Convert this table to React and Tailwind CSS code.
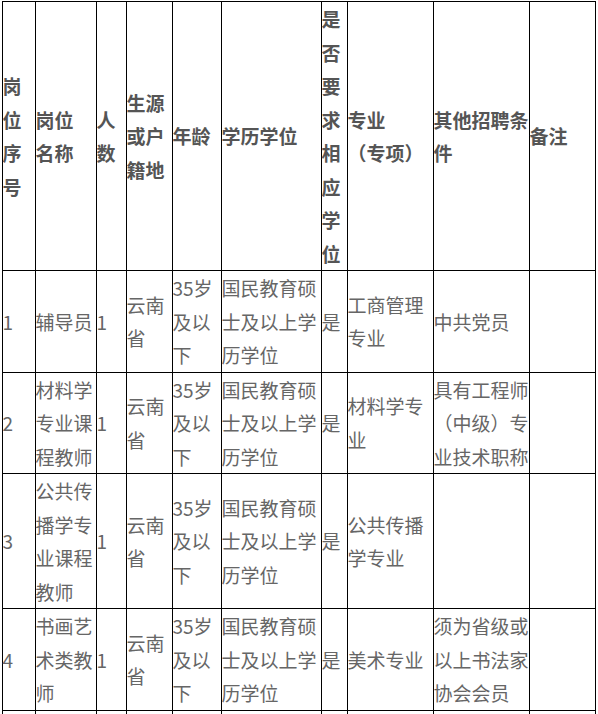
import React from 'react';

const COLS = [33, 61, 30, 46, 49, 100, 26, 86, 96, 66];

// header labels; a \n marks a forced line break
const HEADERS = [
  '岗位序号',
  '岗位\n名称',
  '人数',
  '生源或户籍地',
  '年龄',
  '学历学位',
  '是否要求相应学位',
  '专业\n（专项）',
  '其他招聘条件',
  '备注',
];

const ROWS = [
  ['1', '辅导员', '1', '云南省', '35岁及以下', '国民教育硕士及以上学历学位', '是', '工商管理专业', '中共党员', ''],
  ['2', '材料学专业课程教师', '1', '云南省', '35岁及以下', '国民教育硕士及以上学历学位', '是', '材料学专业', '具有工程师（中级）专业技术职称', ''],
  ['3', '公共传播学专业课程教师', '1', '云南省', '35岁及以下', '国民教育硕士及以上学历学位', '是', '公共传播学专业', '', ''],
  ['4', '书画艺术类教师', '1', '云南省', '35岁及以下', '国民教育硕士及以上学历学位', '是', '美术专业', '须为省级或以上书法家协会会员', ''],
];

const cell = 'border border-black p-0 align-middle text-left';

export default function App() {
  return (
    <div className="bg-white pl-[1.5px] pt-[1px] font-['Noto_Sans_CJK_SC',sans-serif] text-[19px] leading-[33.5px]">
      <table className="table-fixed border-collapse w-[594px]">
        <colgroup>
          {COLS.map((w, i) => (
            <col key={i} style={{ width: w }} />
          ))}
        </colgroup>
        <thead>
          <tr>
            {HEADERS.map((h) => (
              <th key={h} className={`${cell} font-bold text-[#555] whitespace-pre-line`}>
                {h}
              </th>
            ))}
          </tr>
        </thead>
        <tbody>
          {ROWS.map((row) => (
            <tr key={row[0]}>
              {row.map((v, i) => (
                <td key={i} className={`${cell} text-[#666]`}>
                  {v}
                </td>
              ))}
            </tr>
          ))}
          {/* next row, cut off by the bottom edge */}
          <tr className="h-[102px]">
            {COLS.map((w, i) => (
              <td key={i} className={cell} />
            ))}
          </tr>
        </tbody>
      </table>
    </div>
  );
}
